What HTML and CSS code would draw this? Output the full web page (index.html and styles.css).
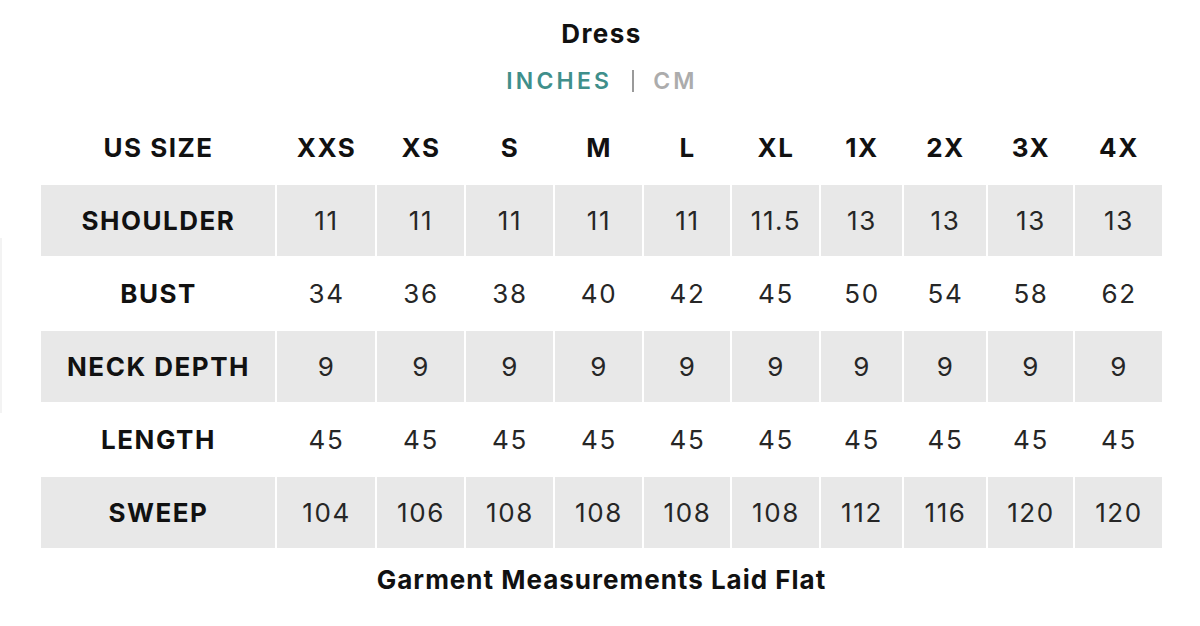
FILE: index.html
```html
<!DOCTYPE html>
<html lang="en">
<head>
<meta charset="utf-8">
<title>Dress Size Chart</title>
<link rel="stylesheet" href="styles.css">
</head>
<body>
<main class="chart">
  <h1 class="chart-title">Dress</h1>
  <div class="unit-toggle">
    <span class="unit unit-active">INCHES</span>
    <span class="unit-sep"></span>
    <span class="unit unit-inactive">CM</span>
  </div>
  <table class="size-table">
    <colgroup>
      <col class="c-label">
      <col class="c-xxs">
      <col class="c-87">
      <col class="c-87">
      <col class="c-87">
      <col class="c-86">
      <col class="c-87">
      <col class="c-81">
      <col class="c-82">
      <col class="c-85">
      <col class="c-87">
    </colgroup>
    <thead>
      <tr>
        <th>US SIZE</th><th>XXS</th><th>XS</th><th>S</th><th>M</th><th>L</th><th>XL</th><th>1X</th><th>2X</th><th>3X</th><th>4X</th>
      </tr>
    </thead>
    <tbody>
      <tr class="shaded">
        <th>SHOULDER</th><td>11</td><td>11</td><td>11</td><td>11</td><td>11</td><td>11.5</td><td>13</td><td>13</td><td>13</td><td>13</td>
      </tr>
      <tr>
        <th>BUST</th><td>34</td><td>36</td><td>38</td><td>40</td><td>42</td><td>45</td><td>50</td><td>54</td><td>58</td><td>62</td>
      </tr>
      <tr class="shaded">
        <th>NECK DEPTH</th><td>9</td><td>9</td><td>9</td><td>9</td><td>9</td><td>9</td><td>9</td><td>9</td><td>9</td><td>9</td>
      </tr>
      <tr>
        <th>LENGTH</th><td>45</td><td>45</td><td>45</td><td>45</td><td>45</td><td>45</td><td>45</td><td>45</td><td>45</td><td>45</td>
      </tr>
      <tr class="shaded">
        <th>SWEEP</th><td>104</td><td>106</td><td>108</td><td>108</td><td>108</td><td>108</td><td>112</td><td>116</td><td>120</td><td>120</td>
      </tr>
    </tbody>
  </table>
  <p class="chart-note">Garment Measurements Laid Flat</p>
</main>
</body>
</html>
```

FILE: styles.css
```css
html, body {
  margin: 0;
  padding: 0;
  background: #ffffff;
}

body {
  font-family: "Inter", "Liberation Sans", Arial, sans-serif;
  color: #161616;
  width: 1200px;
  height: 626px;
  overflow: hidden;
  position: relative;
}

body::before {
  content: "";
  position: absolute;
  left: 0;
  top: 238px;
  width: 2px;
  height: 175px;
  background: #f3f3f3;
}

.chart {
  display: flex;
  flex-direction: column;
  align-items: center;
  padding-top: 19px;
}

.chart-title {
  margin: 0;
  font-size: 26px;
  line-height: 30px;
  font-weight: 700;
  color: #111;
  letter-spacing: 1.4px;
  padding-left: 3px;
}

.unit-toggle {
  margin-top: 17px;
  display: flex;
  align-items: center;
  height: 30px;
  padding-left: 4px;
}

.unit {
  font-size: 23px;
  line-height: 30px;
  font-weight: 600;
  letter-spacing: 3.2px;
}

.unit-active {
  color: #3f8f8b;
}

.unit-inactive {
  color: #acacac;
}

.unit-sep {
  width: 2px;
  height: 22px;
  background: #9a9a9a;
  margin: 0 19px 0 20px;
}

.size-table {
  margin-top: 14px;
  align-self: flex-start;
  margin-left: 39px;
  border-collapse: separate;
  border-spacing: 2px;
  table-layout: fixed;
  width: 1125px;
}

.c-label { width: 234px; }
.c-xxs { width: 98px; }
.c-87 { width: 87px; }
.c-86 { width: 86px; }
.c-81 { width: 81px; }
.c-82 { width: 82px; }
.c-85 { width: 85px; }

.size-table th,
.size-table td {
  height: 71px;
  padding: 0 0 0 1px;
  text-align: center;
  vertical-align: middle;
  font-size: 26px;
  line-height: 30px;
}

.size-table th {
  font-weight: 700;
  color: #111;
  letter-spacing: 1.5px;
}

.size-table td {
  font-weight: 400;
  color: #262626;
  letter-spacing: 1.6px;
}

.shaded th,
.shaded td {
  background: #e8e8e8;
}

.chart-note {
  margin: 15px 0 0;
  font-size: 26px;
  line-height: 30px;
  font-weight: 700;
  color: #111;
  letter-spacing: 1px;
  padding-left: 3px;
}
```
